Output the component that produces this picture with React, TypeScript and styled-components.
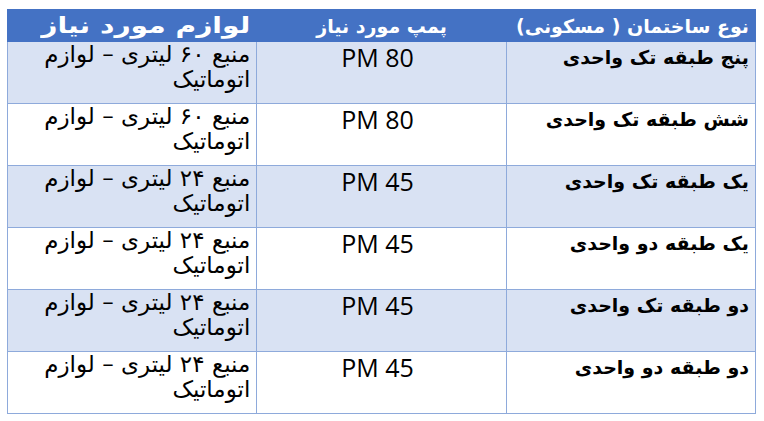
import React from "react";
import styled, { createGlobalStyle } from "styled-components";

const GlobalStyle = createGlobalStyle`
  html, body {
    margin: 0;
    padding: 0;
    background: #ffffff;
  }
  body {
    font-family: "Open Sans", "DejaVu Sans", sans-serif;
  }
`;

const Page = styled.div`
  padding: 9px 0 0 7px;
`;

const Table = styled.table`
  width: 749px;
  border-collapse: collapse;
  table-layout: fixed;
  direction: rtl;
`;

const HeadCell = styled.th<{ $center?: boolean }>`
  height: 31px;
  padding: 0 6px;
  background: #4472c4;
  color: #ffffff;
  font-family: "DejaVu Sans", sans-serif;
  font-size: 19px;
  font-weight: bold;
  text-align: ${(p) => (p.$center ? "center" : "right")};
  vertical-align: middle;
  border: 1px solid #4472c4;
  white-space: nowrap;
`;

// the last title is drawn wider in the original
const WideTitle = styled.span`
  display: inline-block;
  font-size: 22px;
  transform: scaleX(1.28);
  transform-origin: right center;
`;

const Row = styled.tr<{ $shaded: boolean }>`
  height: 62px;
  background: ${(p) => (p.$shaded ? "#d9e2f3" : "#ffffff")};
`;

const Cell = styled.td<{ $bold?: boolean; $center?: boolean }>`
  padding: ${(p) => (p.$bold ? "3px" : "0")} 6px 0 6px;
  border: 1px solid #8eaadb;
  vertical-align: top;
  color: #000000;
  font-family: "DejaVu Sans", sans-serif;
  font-size: ${(p) => (p.$bold ? "19px" : "23px")};
  font-weight: ${(p) => (p.$bold ? "bold" : "normal")};
  line-height: 25px;
  text-align: ${(p) => (p.$center ? "center" : "right")};
`;

const Model = styled.span`
  display: inline-block;
  margin-right: 8px;
  font-family: "Open Sans", sans-serif;
  font-size: 25px;
  line-height: 30px;
`;

const rows = [
  { type: "پنج طبقه تک واحدی", pump: "PM 80", tank: "۶۰" },
  { type: "شش طبقه تک واحدی", pump: "PM 80", tank: "۶۰" },
  { type: "یک طبقه تک واحدی", pump: "PM 45", tank: "۲۴" },
  { type: "یک طبقه دو واحدی", pump: "PM 45", tank: "۲۴" },
  { type: "دو طبقه تک واحدی", pump: "PM 45", tank: "۲۴" },
  { type: "دو طبقه دو واحدی", pump: "PM 45", tank: "۲۴" },
];

export default function App() {
  return (
    <Page>
      <GlobalStyle />
      <Table dir="rtl">
        <thead>
          <tr>
            <HeadCell>نوع ساختمان ( مسکونی)</HeadCell>
            <HeadCell $center>پمپ مورد نیاز</HeadCell>
            <HeadCell>
              <WideTitle>لوازم مورد نیاز</WideTitle>
            </HeadCell>
          </tr>
        </thead>
        <tbody>
          {rows.map((r, i) => (
            <Row key={i} $shaded={i % 2 === 0}>
              <Cell $bold>{r.type}</Cell>
              <Cell $center>
                <Model dir="ltr">{r.pump}</Model>
              </Cell>
              <Cell>
                منبع {r.tank} لیتری – لوازم
                <br />
                اتوماتیک
              </Cell>
            </Row>
          ))}
        </tbody>
      </Table>
    </Page>
  );
}
